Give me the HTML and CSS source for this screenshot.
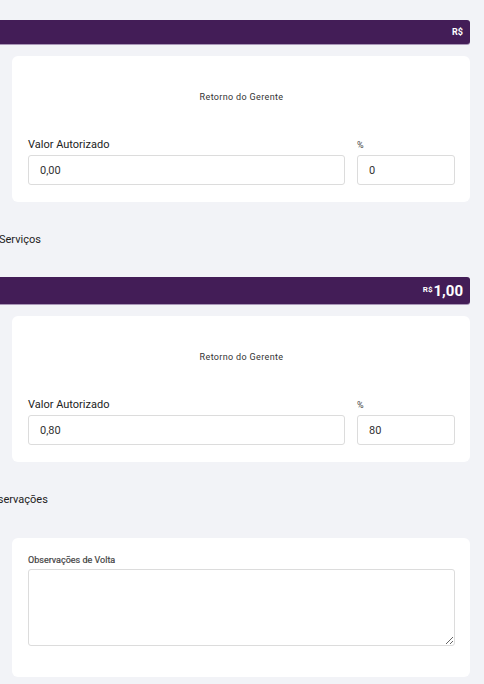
FILE: index.html
```html
<!DOCTYPE html>
<html lang="pt-BR">
<head>
<meta charset="utf-8">
<link rel="stylesheet" href="styles.css">
</head>
<body>
<div class="page">
  <div class="bar bar-small"><span class="cur">R$</span></div>
  <div class="card">
    <div class="card-title">Retorno do Gerente</div>
    <div class="row labels"><span>Valor Autorizado</span><span>%</span></div>
    <div class="row">
      <input class="inp" type="text" value="0,00">
      <input class="inp" type="text" value="0">
    </div>
  </div>

  <div class="heading h-serv">Serviços</div>

  <div class="bar bar-big"><span class="cur-sup">R$</span><span class="amount">1,00</span></div>
  <div class="card">
    <div class="card-title">Retorno do Gerente</div>
    <div class="row labels"><span>Valor Autorizado</span><span>%</span></div>
    <div class="row">
      <input class="inp" type="text" value="0,80">
      <input class="inp" type="text" value="80">
    </div>
  </div>

  <div class="heading h-obs">Observações</div>

  <div class="card card-obs">
    <div class="obs-label">Observações de Volta</div>
    <textarea class="ta"></textarea>
  </div>
</div>
</body>
</html>
```

FILE: styles.css
```css
html, body {
  margin: 0;
  padding: 0;
  background: #f2f3f7;
  font-family: Roboto, "Noto Sans", sans-serif;
  color: #333;
  overflow: hidden;
}
.page {
  margin-left: -20px;
  width: 490px;
  padding-top: 20px;
}
.bar {
  background: #431d57;
  border-radius: 0 3px 3px 0;
  display: flex;
  justify-content: flex-end;
  align-items: center;
  padding-right: 7px;
  color: #fff;
  font-weight: 700;
  box-shadow: 0 1px 0 rgba(120, 90, 140, 0.6);
}
.bar-small {
  height: 24px;
}
.cur {
  font-size: 9px;
}
.bar-big {
  height: 27px;
}
.cur-sup {
  font-size: 8px;
  align-self: flex-start;
  margin-top: 8px;
  margin-right: 1px;
}
.amount {
  font-size: 15px;
}
.card {
  background: #fff;
  border-radius: 6px;
  margin: 12px 0 0 32px;
  padding: 0 15px 17px 16px;
}
.card-title {
  text-align: center;
  font-size: 9px;
  letter-spacing: 0.35px;
  line-height: 12px;
  padding-top: 35px;
  color: #333;
}
.row {
  display: grid;
  grid-template-columns: 1fr 98px;
  column-gap: 12px;
}
.labels {
  margin-top: 35px;
  font-size: 11px;
  line-height: 14px;
  font-weight: 400;
  color: #222;
  margin-bottom: 3px;
}
.labels span:last-child {
  font-size: 9px;
  color: #444;
}
.inp {
  box-sizing: border-box;
  height: 30px;
  border: 1px solid #dcdcdc;
  border-radius: 3px;
  padding: 0 11px;
  font-family: Roboto, "Noto Sans", sans-serif;
  font-size: 11px;
  color: #333;
  background: #fff;
  width: 100%;
  margin: 0;
}
.heading {
  font-size: 11px;
  line-height: 16px;
  color: #222;
}
.h-serv {
  margin-top: 30px;
  margin-bottom: 29px;
  padding-left: 19px;
}
.h-obs {
  margin-top: 30px;
  margin-bottom: 30px;
  padding-left: 4px;
}
.card-obs {
  margin-top: 0;
  padding-top: 16px;
  padding-bottom: 31px;
}
.obs-label {
  font-size: 9px;
  line-height: 12px;
  font-weight: 400;
  color: #444;
  -webkit-text-stroke: 0.2px #444;
  margin-bottom: 3px;
}
.ta {
  display: block;
  box-sizing: border-box;
  width: 100%;
  height: 77px;
  border: 1px solid #dcdcdc;
  border-radius: 3px;
  margin: 0;
  background: #fff;
}
```
